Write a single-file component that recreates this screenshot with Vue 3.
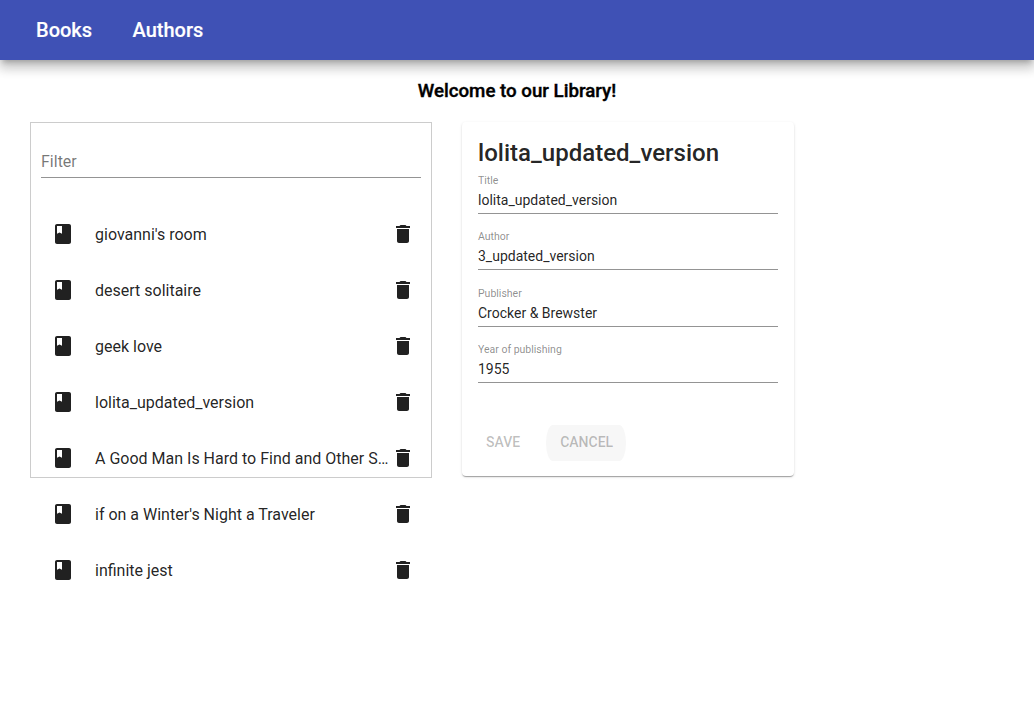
<script setup>
const books = ["giovanni's room", 'desert solitaire', 'geek love', 'lolita_updated_version', 'A Good Man Is Hard to Find and Other Stories', "if on a Winter's Night a Traveler", 'infinite jest']
const fields = [
  { label: 'Title', value: 'lolita_updated_version' },
  { label: 'Author', value: '3_updated_version' },
  { label: 'Publisher', value: 'Crocker & Brewster' },
  { label: 'Year of publishing', value: '1955' },
]
</script>

<template>
  <div class="page">
    <nav class="nav"><a>Books</a><a>Authors</a></nav>
    <h3 class="welcome">Welcome to our Library!</h3>
    <main class="content">
      <section class="library">
        <div class="filter">Filter</div>
        <ul class="list">
          <li v-for="book in books" :key="book" class="row">
            <svg class="icon" viewBox="0 0 24 24"><path d="M18 2H6c-1.100 0-2 .9-2 2v16c0 1.100.9 2 2 2h12c1.100 0 2-.9 2-2V4c0-1.100-.9-2-2-2zM6 4h5v7.700l-2.500-1.200L6 11.700V4z" /></svg>
            <span class="name">{{ book }}</span>
            <svg class="icon" viewBox="0 0 24 24"><path d="M6 19c0 1.100.9 2 2 2h8c1.100 0 2-.9 2-2V7H6v12zM19 4h-3.500l-1-1h-5l-1 1H5v2h14V4z" /></svg>
          </li>
        </ul>
      </section>
      <section class="card">
        <h2>lolita_updated_version</h2>
        <div class="fields">
          <div v-for="f in fields" :key="f.label" class="field">
            <label>{{ f.label }}</label>
            <div class="value">{{ f.value }}</div>
          </div>
        </div>
        <div class="actions"><button class="save">SAVE</button><button class="cancel">CANCEL</button></div>
      </section>
    </main>
  </div>
</template>

<style>
body { margin: 0; background: #fff; }
</style>
<style scoped>
* { box-sizing: border-box; }
.page { height: 708px; overflow: hidden; font-family: Roboto, sans-serif; color: rgba(0,0,0,.87); }
.nav { height: 60px; padding: 0 36px; display: flex; gap: 40.5px; align-items: center; background: #3f51b5; color: #fff; font-size: 20px; font-weight: 500; -webkit-text-stroke: .15px #fff; box-shadow: 0 5px 5px -3px rgba(0,0,0,.2), 0 8px 10px 1px rgba(0,0,0,.14), 0 3px 14px 2px rgba(0,0,0,.12); }
.welcome { margin: 20px 0 0; height: 22px; line-height: 22px; font-size: 18.72px; font-weight: 500; -webkit-text-stroke: .4px #000; text-align: center; color: #000; }
.content { display: flex; gap: 30px; padding: 20px 30px; align-items: flex-start; }
.library { width: 402px; height: 356px; border: 1px solid #ccc; padding: 0 10px; }
.filter { height: 55px; padding-top: 30px; border-bottom: 1px solid #949494; font-size: 16px; line-height: 18px; color: rgba(0,0,0,.54); }
.list { list-style: none; margin: 0; padding: 28px 0 0; }
.row { height: 56px; display: flex; align-items: center; padding: 0 6px 0 10px; }
.icon { width: 24px; height: 24px; flex: none; fill: #212121; }
.name { flex: 1; min-width: 0; margin-left: 20px; padding-top: 2px; font-size: 16px; line-height: 24px; white-space: nowrap; overflow: hidden; text-overflow: ellipsis; }
.card { width: 332px; height: 354px; padding: 15px 16px 16px; border-radius: 4px; box-shadow: 0 2px 1px -1px rgba(0,0,0,.2), 0 1px 1px rgba(0,0,0,.14), 0 1px 3px rgba(0,0,0,.12); }
h2 { margin: 0; font-size: 24.05px; line-height: 32px; font-weight: 500; }
.fields { padding-top: 4px; }
.field { height: 56.3px; font-size: 14px; }
label { display: block; font-size: 10.5px; line-height: 15px; color: rgba(0,0,0,.46); }
.value { height: 26px; padding-top: 3px; line-height: 18px; border-bottom: 1px solid #949494; }
.actions { display: flex; padding-top: 27px; gap: 18px; }
button { border: 0; height: 36px; font: 500 14px Roboto, sans-serif; color: rgba(0,0,0,.26); background: transparent; padding: 0 8px 2px; }
.cancel { width: 80px; background: #f7f7f7; border-radius: 7px / 18px; padding: 0 12px 2px 13px; white-space: nowrap; }
</style>
